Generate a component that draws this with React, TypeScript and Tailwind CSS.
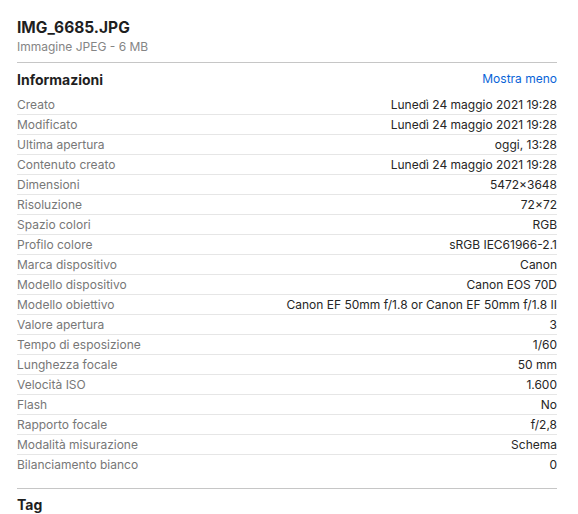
const rows: [string, string][] = [
  ["Creato", "Lunedì 24 maggio 2021 19:28"],
  ["Modificato", "Lunedì 24 maggio 2021 19:28"],
  ["Ultima apertura", "oggi, 13:28"],
  ["Contenuto creato", "Lunedì 24 maggio 2021 19:28"],
  ["Dimensioni", "5472×3648"],
  ["Risoluzione", "72×72"],
  ["Spazio colori", "RGB"],
  ["Profilo colore", "sRGB IEC61966-2.1"],
  ["Marca dispositivo", "Canon"],
  ["Modello dispositivo", "Canon EOS 70D"],
  ["Modello obiettivo", "Canon EF 50mm f/1.8 or Canon EF 50mm f/1.8 II"],
  ["Valore apertura", "3"],
  ["Tempo di esposizione", "1/60"],
  ["Lunghezza focale", "50 mm"],
  ["Velocità ISO", "1.600"],
  ["Flash", "No"],
  ["Rapporto focale", "f/2,8"],
  ["Modalità misurazione", "Schema"],
  ["Bilanciamento bianco", "0"],
]

export default function App() {
  return (
    <div className="h-[514px] w-[578px] overflow-hidden bg-white pl-[17px] pr-[21px] pt-[21px] font-['Inter',sans-serif] antialiased">
      <h1 className="text-[15.5px] font-bold leading-[14px] text-[#1f1f1f]">IMG_6685.JPG</h1>
      <p className="mt-[5px] text-[12px] leading-[14px] text-[#858585]">Immagine JPEG - 6 MB</p>

      <div className="mt-[8px] border-t border-[#c6c6c6]" />

      {/* Informazioni */}
      <div className="flex h-[32px] items-center justify-between">
        <h2 className="text-[14px] font-bold text-[#1f1f1f]">Informazioni</h2>
        <button className="text-[12px] text-[#0a64d8]">Mostra meno</button>
      </div>

      <div>
        {rows.map(([label, value], i) => (
          <div
            key={label}
            className={`flex h-[20px] items-center justify-between border-b text-[12px] ${
              i === rows.length - 1 ? "border-transparent" : "border-[#e6e6e6]"
            }`}
          >
            <span className="text-[#777777]">{label}</span>
            <span className="text-[#262626]">{value}</span>
          </div>
        ))}
      </div>

      <div className="mt-[13px] border-t border-[#c6c6c6]" />
      <h2 className="mt-[8px] text-[14px] font-bold leading-[16px] text-[#1f1f1f]">Tag</h2>
    </div>
  )
}
